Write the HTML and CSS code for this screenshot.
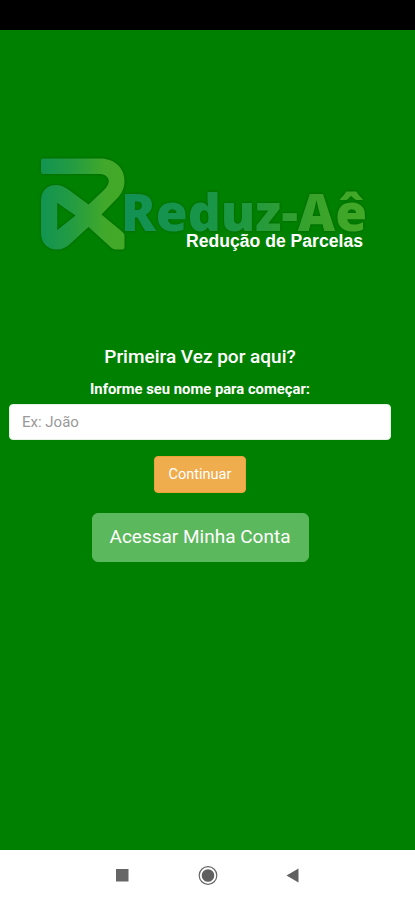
FILE: index.html
```html
<!DOCTYPE html>
<html lang="pt-BR">
<head>
<meta charset="utf-8">
<meta name="viewport" content="width=device-width, initial-scale=1">
<title>Reduz-Aê</title>
<link rel="stylesheet" href="styles.css">
</head>
<body>
<div class="status-bar"></div>
<main class="screen">
  <svg class="logo" viewBox="30 145 345 115" role="img" aria-label="Reduz-Aê Redução de Parcelas">
    <defs>
      <linearGradient id="mark" gradientUnits="userSpaceOnUse" x1="41" y1="0" x2="124" y2="0">
        <stop offset="0" stop-color="#129451"/><stop offset=".35" stop-color="#229b43"/><stop offset=".75" stop-color="#40a82b"/><stop offset="1" stop-color="#43a927"/>
      </linearGradient>
      <linearGradient id="word" gradientUnits="userSpaceOnUse" x1="124" y1="0" x2="366" y2="0">
        <stop offset="0" stop-color="#129155"/><stop offset=".45" stop-color="#1c9744"/><stop offset=".8" stop-color="#3aa32a"/><stop offset="1" stop-color="#43a927"/>
      </linearGradient>
    </defs>
    <g class="glow">
      <path class="mark" d="M43 158.500H100C115 158.500 124.500 168 124.500 181C124.500 189 121 194.500 117 198.500L101.500 214.500L122 231.500Q124.500 233.500 124.500 236V247Q124.500 249.500 122 249.500H116Q113 249.500 111 247.500L88.500 227L70 244C66.500 247.500 62 249.500 57 249.500C47 249.500 41 242.500 41 233V201C41 191 47 185 56 185C61 185 65 187 69 190L88.500 204.500L104 190C108.500 185.500 110 181 107.500 177.500Q105 174 100 174H43Q41 174 41 172V160.500Q41 158.500 43 158.500ZM57.300 203V230L75.500 215.500Z"/>
      <text class="word" x="121" y="231" textLength="246" lengthAdjust="spacingAndGlyphs">Reduz-Aê</text>
    </g>
    <text class="tagline" x="186" y="246.500" textLength="177" lengthAdjust="spacingAndGlyphs">Redução de Parcelas</text>
  </svg>
  <form class="welcome">
    <h1 class="title">Primeira Vez por aqui?</h1>
    <label class="label" for="name">Informe seu nome para começar:</label>
    <input class="field" id="name" type="text" placeholder="Ex: João">
    <button class="button continue" type="button">Continuar</button>
    <button class="button account" type="button">Acessar Minha Conta</button>
  </form>
</main>
<nav class="nav-bar">
  <svg class="nav-icons" viewBox="0 0 200 30">
    <rect x="16" y="9" width="12.500" height="12.500" fill="#666"/>
    <circle cx="108" cy="15.500" r="8.800" fill="none" stroke="#666" stroke-width="1.200"/>
    <circle cx="108" cy="15.500" r="6.300" fill="#606060"/>
    <path d="M186.500 15.500L198.500 8.500V22.500Z" fill="#606060"/>
  </svg>
</nav>
</body>
</html>
```
FILE: styles.css
```css
* { box-sizing: border-box; }
body {
  margin: 0;
  height: 900px;
  display: flex;
  flex-direction: column;
  overflow: hidden;
  background: #008000;
  font-family: Roboto, sans-serif;
  color: #fff;
}
.status-bar { height: 30px; background: #000; }
.screen { flex: 1; padding-top: 115px; }
.logo { display: block; width: 345px; height: 115px; margin-left: 30px; }
.glow { filter: drop-shadow(0 0 1.5px rgba(0, 60, 0, .45)); }
.mark { fill: url(#mark); fill-rule: evenodd; }
.word { font: 800 51px "Open Sans", sans-serif; fill: url(#word); }
.tagline { font: bold 18px "Liberation Sans", Arial, sans-serif; fill: #fff; }
.welcome {
  width: 382px;
  margin: 84px 0 0 9px;
  display: flex;
  flex-direction: column;
  align-items: center;
}
.title { margin: 0; font-size: 19px; line-height: 26px; font-weight: 500; }
.label { margin-top: 9px; font-size: 14.8px; line-height: 20px; font-weight: 700; }
.field {
  width: 100%;
  height: 36px;
  margin-top: 5px;
  padding: 0 12px;
  border: 1px solid #e5f2e5;
  border-radius: 4px;
  background: #fff;
  font: 15px Roboto, sans-serif;
}
.field::placeholder { color: #999; opacity: 1; }
.button { padding: 0; border: 1px solid; color: #fff; font-family: Roboto, sans-serif; }
.continue {
  width: 92px;
  height: 37px;
  margin-top: 16px;
  border-color: #eea236;
  border-radius: 4px;
  background: #f0ad4e;
  font-size: 14.5px;
}
.account {
  width: 217px;
  height: 49px;
  margin-top: 20px;
  padding-bottom: 2px;
  border-color: #5cb85c;
  border-radius: 6px;
  background: #5cb85c;
  font-size: 19px;
}
.nav-bar { height: 50px; padding: 10px 0 0 100px; background: #fff; }
.nav-icons { display: block; width: 200px; height: 30px; }
```
